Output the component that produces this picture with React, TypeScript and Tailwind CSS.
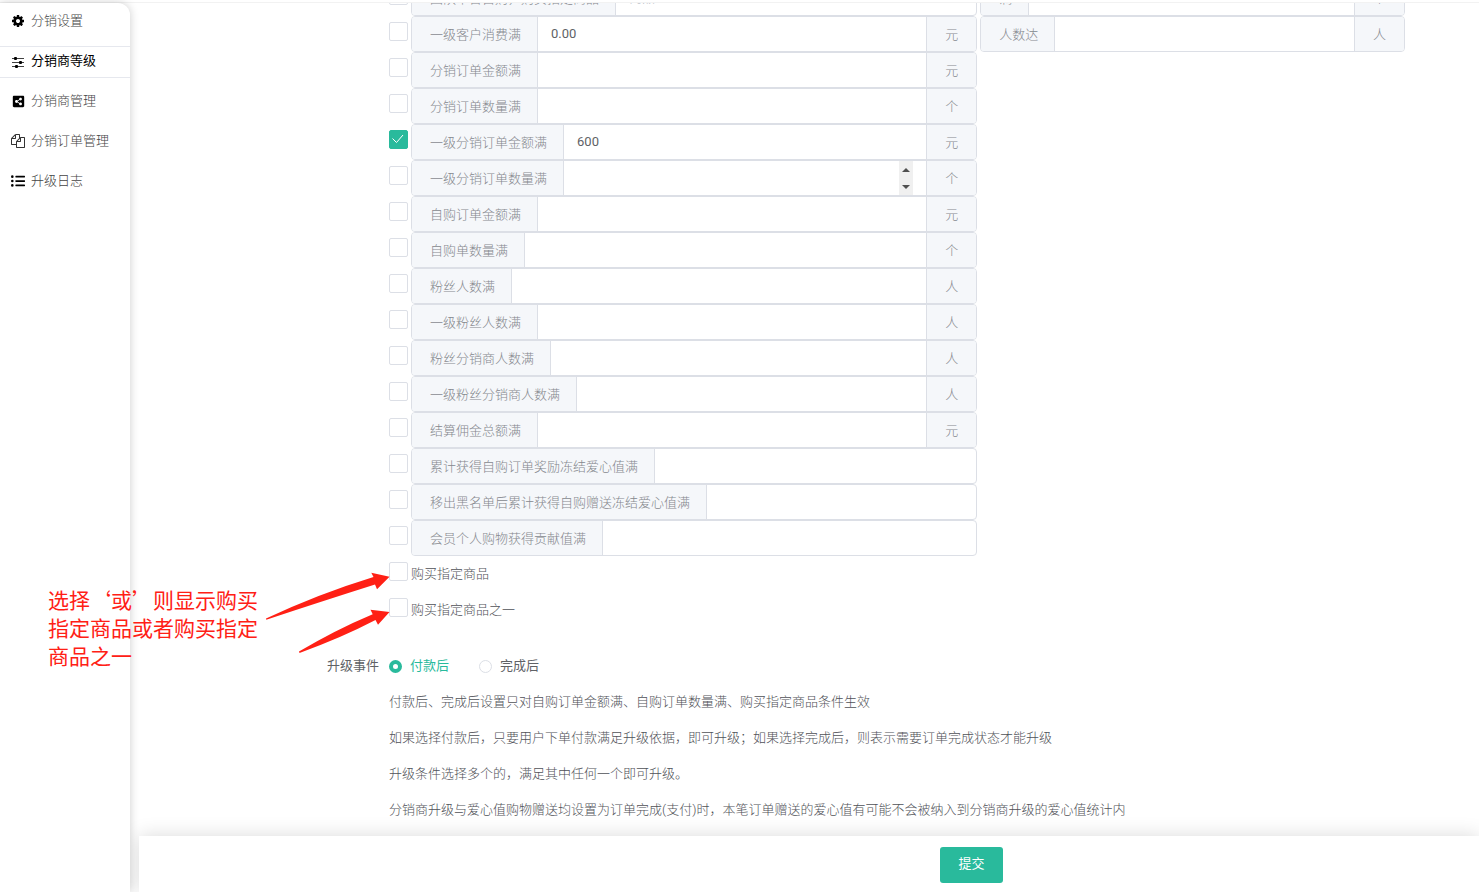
import { useState, ReactNode } from 'react';
import { FaListUl, FaShareAltSquare } from 'react-icons/fa';

type ExtraField = { prefix: string; suffix: string };

type Condition = {
  id: string;
  label: string;
  unit?: string;
  value?: string;
  placeholder?: string;
  checked?: boolean;
  spinner?: boolean;
  extra?: ExtraField;
};

const CONDITIONS: Condition[] = [
  { id: 'team', label: '团队不含自购，购买指定商品', placeholder: '商品', extra: { prefix: '满', suffix: '个' } },
  { id: 'client', label: '一级客户消费满', unit: '元', value: '0.00', extra: { prefix: '人数达', suffix: '人' } },
  { id: 'orderMoney', label: '分销订单金额满', unit: '元' },
  { id: 'orderCount', label: '分销订单数量满', unit: '个' },
  { id: 'firstMoney', label: '一级分销订单金额满', unit: '元', value: '600', checked: true },
  { id: 'firstCount', label: '一级分销订单数量满', unit: '个', spinner: true },
  { id: 'selfMoney', label: '自购订单金额满', unit: '元' },
  { id: 'selfCount', label: '自购单数量满', unit: '个' },
  { id: 'fans', label: '粉丝人数满', unit: '人' },
  { id: 'firstFans', label: '一级粉丝人数满', unit: '人' },
  { id: 'fansAgent', label: '粉丝分销商人数满', unit: '人' },
  { id: 'firstFansAgent', label: '一级粉丝分销商人数满', unit: '人' },
  { id: 'commission', label: '结算佣金总额满', unit: '元' },
  { id: 'loveSelf', label: '累计获得自购订单奖励冻结爱心值满' },
  { id: 'loveBlack', label: '移出黑名单后累计获得自购赠送冻结爱心值满' },
  { id: 'contribution', label: '会员个人购物获得贡献值满' },
];

const GOODS = [
  { id: 'goodsAll', label: '购买指定商品' },
  { id: 'goodsAny', label: '购买指定商品之一' },
];

const NOTES = [
  '付款后、完成后设置只对自购订单金额满、自购订单数量满、购买指定商品条件生效',
  '如果选择付款后，只要用户下单付款满足升级依据，即可升级；如果选择完成后，则表示需要订单完成状态才能升级',
  '升级条件选择多个的，满足其中任何一个即可升级。',
  '分销商升级与爱心值购物赠送均设置为订单完成(支付)时，本笔订单赠送的爱心值有可能不会被纳入到分销商升级的爱心值统计内',
];

function CogIcon() {
  return (
    <svg viewBox="0 0 1792 1792" className="w-[14px] h-[14px] fill-current">
      <path d="M1152 896q0-106-75-181t-181-75-181 75-75 181 75 181 181 75 181-75 75-181zm512-109v222q0 12-8 23t-20 13l-185 28q-19 54-39 91 35 50 107 138 10 12 10 25t-9 23q-27 37-99 108t-94 71q-12 0-26-9l-138-108q-44 23-91 38-16 136-29 186-7 28-36 28h-222q-14 0-24.5-8.5t-11.5-21.5l-28-184q-49-16-90-37l-141 107q-10 9-25 9-14 0-25-11-126-114-165-168-7-10-7-23 0-12 8-23 15-21 51-66.5t54-70.5q-27-50-41-99l-183-27q-13-2-21-12.5t-8-23.5v-222q0-12 8-23t19-13l186-28q14-46 39-92-40-57-107-138-10-12-10-24 0-10 9-23 26-36 98.5-107.5t94.5-71.5q13 0 26 10l138 107q44-23 91-38 16-136 29-186 7-28 36-28h222q14 0 24.5 8.5t11.5 21.5l28 184q49 16 90 37l142-107q9-9 24-9 13 0 25 10 129 119 165 170 7 8 7 22 0 12-8 23-15 21-51 66.5t-54 70.5q26 50 41 98l183 28q13 2 21 12.5t8 23.5z" />
    </svg>
  );
}

function SlidersIcon() {
  return (
    <svg viewBox="0 0 14 14" className="w-[14px] h-[14px]" stroke="currentColor" fill="currentColor">
      <path d="M1 4.500h12M1 8.500h12M1 12.500h12" strokeWidth="1" strokeOpacity="0.75" fill="none" />
      <g stroke="none">
        <rect x="3" y="3" width="3" height="3" rx="1" />
        <rect x="8" y="7" width="3" height="3" rx="1" />
        <rect x="4" y="11" width="3" height="3" rx="1" />
      </g>
    </svg>
  );
}

function FilesIcon() {
  return (
    <svg viewBox="0 0 1792 1792" className="w-[14px] h-[14px] fill-[#333]">
      <path d="M1696 384q40 0 68 28t28 68v1216q0 40-28 68t-68 28h-960q-40 0-68-28t-28-68v-288h-544q-40 0-68-28t-28-68v-672q0-40 20-88t48-76l408-408q28-28 76-48t88-20h416q40 0 68 28t28 68v328q68-40 128-40h416zm-544 213l-299 299h299v-299zm-640-384l-299 299h299v-299zm196 647l316-316v-416h-384v416q0 40-28 68t-68 28h-416v640h512v-256q0-40 20-88t48-76zm956 804v-1152h-384v416q0 40-28 68t-68 28h-416v640h896z" />
    </svg>
  );
}

const MENU: { label: string; icon: ReactNode; active?: boolean }[] = [
  { label: '分销设置', icon: <CogIcon /> },
  { label: '分销商等级', icon: <SlidersIcon />, active: true },
  { label: '分销商管理', icon: <FaShareAltSquare size={13} /> },
  { label: '分销订单管理', icon: <FilesIcon /> },
  { label: '升级日志', icon: <FaListUl size={14} /> },
];

function Sidebar() {
  return (
    <nav className="relative z-20 w-[130px] shrink-0 bg-white rounded-tr-xl shadow-[0_0_10px_rgba(0,0,0,0.2)] pt-[3px] flex flex-col gap-2">
      {MENU.map(item => (
        <a
          key={item.label}
          href="#"
          className={`h-8 flex items-center gap-[6px] pl-[11px] pb-[2px] border-y ${item.active ? 'border-[#e6e8ee] text-black font-normal' : 'border-transparent text-[#444]'}`}
        >
          <span className="w-[14px] flex justify-center text-black">{item.icon}</span>
          {item.label}
        </a>
      ))}
    </nav>
  );
}

function CheckBox({ id, defaultChecked, label }: { id: string; defaultChecked?: boolean; label?: string }) {
  return (
    <span className="relative w-[19px] h-[19px] mt-[6px] shrink-0">
      <input
        type="checkbox"
        id={id}
        aria-label={label}
        defaultChecked={defaultChecked}
        className="peer block appearance-none w-[19px] h-[19px] bg-white border border-[#dcdfe6] rounded-[2px] checked:bg-[#29ba9c] checked:border-[#29ba9c]"
      />
      <svg viewBox="0 0 19 19" className="absolute inset-0 hidden peer-checked:block pointer-events-none" fill="none" stroke="#fff">
        <path d="M3.5 8.5l4 4 6.5-7.5" />
      </svg>
    </span>
  );
}

function Spinner() {
  return (
    <span className="w-[14px] mr-[13px] bg-[#f0f0f0] flex flex-col shrink-0">
      <button type="button" aria-label="增加" className="flex-1 flex items-center justify-center">
        <svg viewBox="0 0 8 4" className="w-2 h-1 fill-[#505050]"><path d="M0 4h8L4 0z" /></svg>
      </button>
      <button type="button" aria-label="减少" className="flex-1 flex items-center justify-center">
        <svg viewBox="0 0 8 4" className="w-2 h-1 fill-[#505050]"><path d="M0 0h8L4 4z" /></svg>
      </button>
    </span>
  );
}

function Addon({ children, className }: { children: ReactNode; className: string }) {
  return (
    <span className={`pl-[18px] pt-[2px] bg-[#f5f7fa] text-[#85888e] flex items-center whitespace-nowrap shrink-0 ${className}`}>
      {children}
    </span>
  );
}

type InputGroupProps = { prefix: string; suffix?: string; value?: string; placeholder?: string; spinner?: boolean };

function InputGroup({ prefix, suffix, value, placeholder, spinner }: InputGroupProps) {
  return (
    <label className="h-9 min-w-0 flex border border-[#dcdfe6] rounded-[4px] overflow-hidden divide-x divide-[#dcdfe6]">
      <Addon className="pr-4">{prefix}</Addon>
      <span className="flex-1 min-w-0 flex">
        <input
          type="text"
          inputMode={spinner ? 'numeric' : undefined}
          defaultValue={value}
          placeholder={placeholder}
          className="flex-1 min-w-0 px-[13px] font-normal text-[#606266] placeholder:text-[#c0c4cc] outline-none"
        />
        {spinner && <Spinner />}
      </span>
      {suffix && <Addon className="pr-[18px]">{suffix}</Addon>}
    </label>
  );
}

function ConditionRow({ item }: { item: Condition }) {
  return (
    <div className="grid grid-cols-[19px_4fr_3fr] gap-x-[3px]">
      <CheckBox id={item.id} label={item.label} defaultChecked={item.checked} />
      <InputGroup prefix={item.label} suffix={item.unit} value={item.value} placeholder={item.placeholder} spinner={item.spinner} />
      {item.extra && <InputGroup prefix={item.extra.prefix} suffix={item.extra.suffix} />}
    </div>
  );
}

function Annotation() {
  return (
    <>
      <p className="absolute z-30 left-12 top-[585px] w-[212px] text-[21px] leading-7 font-normal text-[#ff2015] font-['Noto_Sans_CJK_SC',sans-serif] pointer-events-none">
        选择‘或’则显示购买
        <br />
        指定商品或者购买指定
        <br />
        商品之一
      </p>
      <svg viewBox="0 0 130 90" className="absolute z-30 left-[263px] top-[568px] w-[130px] h-[90px] fill-[#ff2015] pointer-events-none">
        <path d="M3 50.6Q55 26 110.500 9L108.300 4.700L126.500 8.700L114 21.200L112 16.500Q60 33 3.300 51.700Z" />
        <path d="M36 83.600Q72 62 109.700 46.200L107.500 41.800L126.500 44L115 56.700L112.500 52Q78 70 36.500 84.900Z" />
      </svg>
    </>
  );
}

export default function App() {
  const [event, setEvent] = useState('pay');

  const events = [
    { id: 'pay', label: '付款后' },
    { id: 'done', label: '完成后' },
  ];

  return (
    <div className="relative h-screen overflow-hidden flex flex-col bg-white text-[13px] leading-5 font-light text-[#505258] font-['Roboto','Noto_Sans_CJK_SC',sans-serif]">
      <header className="h-[3px] shrink-0 border-b border-[#f2f2f2]" />

      <div className="flex-1 min-h-0 flex gap-[9px]">
        <Sidebar />

        <form className="flex-1 min-w-0 flex flex-col" onSubmit={e => e.preventDefault()}>
          <div className="flex-1 min-h-0 overflow-hidden">
            {/* the list is scrolled, its first row is partly under the header */}
            <div className="-mt-[23px] pl-[250px] pr-[74px]">
              {CONDITIONS.map(item => (
                <ConditionRow key={item.id} item={item} />
              ))}
              {GOODS.map(item => (
                <div key={item.id} className="h-9 flex gap-[3px]">
                  <CheckBox id={item.id} />
                  <label htmlFor={item.id} className="leading-9">{item.label}</label>
                </div>
              ))}
            </div>

            <div className="mt-5 flex gap-[10px] pr-[74px]">
              <div id="event-label" className="w-[240px] shrink-0 text-right leading-9 font-normal text-[#606266]">升级事件</div>
              <div className="flex-1 min-w-0">
                <div role="radiogroup" aria-labelledby="event-label" className="h-9 flex items-center gap-[30px]">
                  {events.map(item => (
                    <label key={item.id} className={`flex items-center gap-2 font-normal ${event === item.id ? 'text-[#29ba9c]' : 'text-[#606266]'}`}>
                      <input
                        type="radio"
                        name="event"
                        checked={event === item.id}
                        onChange={() => setEvent(item.id)}
                        className="appearance-none w-[13px] h-[13px] rounded-full bg-white border border-[#dcdfe6] checked:border-[#29ba9c] checked:border-[4px]"
                      />
                      {item.label}
                    </label>
                  ))}
                </div>
                {NOTES.map(note => (
                  <p key={note} className="leading-9">{note}</p>
                ))}
              </div>
            </div>
          </div>

          <footer className="relative z-10 h-14 shrink-0 bg-white shadow-[0_0_20px_rgba(0,0,0,0.15)] pl-[325px] pt-[11px] flex justify-center items-start">
            <button type="submit" className="h-9 px-[18px] pb-[2px] rounded-[3px] bg-[#29ba9c] text-white font-normal">提交</button>
          </footer>
        </form>
      </div>

      <Annotation />
    </div>
  );
}
